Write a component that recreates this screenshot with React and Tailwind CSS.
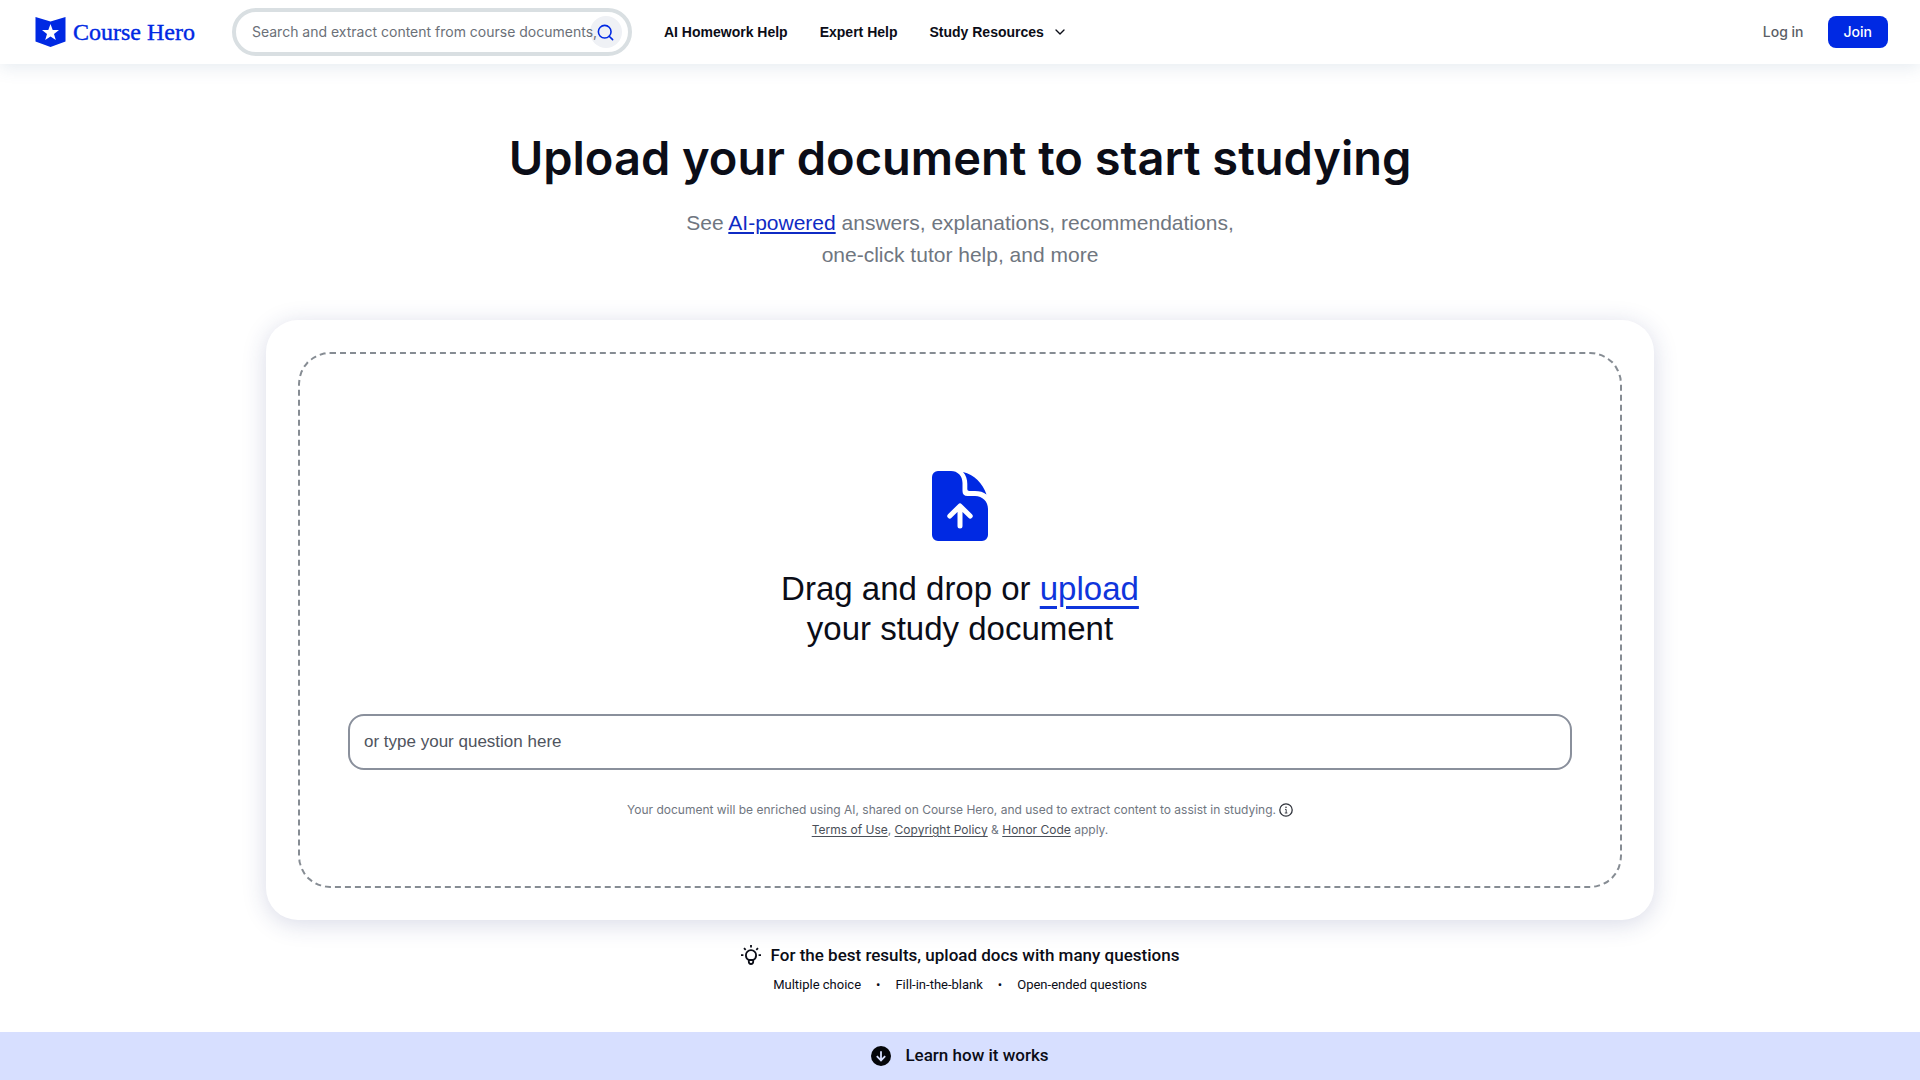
import { ChevronDown, Search } from "lucide-react";

const sans = "font-['Liberation_Sans',Arial,sans-serif]";
const small = "font-['Roboto',sans-serif]";
const inter = "font-['Inter',sans-serif]";

function Logo() {
  return (
    <a href="#" aria-label="Course Hero" className="flex items-center gap-[7px] text-[#0029e3]">
      <svg viewBox="0 0 31 30" className="h-[30px] w-[31px]" aria-hidden="true">
        <path d="M0.5 0 L15.5 4.5 L30.5 0 V24.5 L15.5 30 L0.5 24.5 Z" fill="currentColor" />
        <path
          d="M15.5 7 L17.7 12.9 L24 13.1 L19 17 L20.8 23 L15.5 19.5 L10.2 23 L12 17 L7 13.1 L13.3 12.9 Z"
          fill="white"
        />
      </svg>
      <span className="font-['Liberation_Serif',serif] text-2xl leading-8 [-webkit-text-stroke:0.4px_currentColor]">
        Course Hero
      </span>
    </a>
  );
}

function Header() {
  return (
    <header className="flex h-16 items-center bg-white pl-[35px] pr-8 shadow-[0_4px_16px_rgba(70,110,150,0.13)]">
      <Logo />
      <form className="ml-[37px] flex h-12 w-[400px] items-center rounded-full border-4 border-[#d9dfe2] pl-4 pr-1.5">
        <input
          type="text"
          aria-label="Search"
          placeholder="Search and extract content from course documents,"
          className={`z-10 -mr-2 min-w-0 flex-1 bg-transparent text-sm text-gray-800 outline-none placeholder:text-[#6b7078] ${inter}`}
        />
        <button
          type="button"
          aria-label="Submit search"
          className="flex size-8 shrink-0 items-center justify-center rounded-full bg-[#eff1f5] text-[#0029e3]"
        >
          <Search size={19} strokeWidth={2} />
        </button>
      </form>
      <nav className="ml-8 flex items-center gap-8 text-sm font-bold text-[#0b0d17]">
        <a href="#">AI Homework Help</a>
        <a href="#">Expert Help</a>
        <button type="button" className="flex items-center gap-2">
          Study Resources
          <ChevronDown size={16} strokeWidth={2} />
        </button>
      </nav>
      <div className={`ml-auto flex items-center gap-6 text-sm font-medium ${inter}`}>
        <a href="#" className="text-[#5a5e66]">Log in</a>
        <button type="button" className="h-8 rounded-lg bg-[#0029e3] px-4 text-white">Join</button>
      </div>
    </header>
  );
}

function UploadIcon() {
  return (
    <svg viewBox="0 0 56 70" className="h-[70px] w-14" aria-hidden="true">
      <path
        d="M6 0 H19 C25.5 0 30.5 4.8 30.5 12 V20 C30.5 23.2 32.3 25 35.5 25 H43 C50.5 25 56 30.5 56 38 V64 A6 6 0 0 1 50 70 H6 A6 6 0 0 1 0 64 V6 A6 6 0 0 1 6 0 Z"
        fill="#0029e3"
      />
      <path d="M31 1 C42 3.5 51 12.5 54.5 23.5 C51.5 21 47.5 20 43 20 H37.5 C36 20 35.3 19.3 35.3 18 V13 C35.3 8.3 34 4.3 31 1 Z" fill="#0029e3" />
      <path
        d="M28 55 V35.5 M17.8 45 L28 35 L38.2 45"
        fill="none"
        stroke="white"
        strokeWidth="5"
        strokeLinecap="round"
        strokeLinejoin="round"
      />
    </svg>
  );
}

function InfoIcon() {
  return (
    <svg viewBox="0 0 14 14" className="size-3.5" fill="none" stroke="currentColor" aria-hidden="true">
      <circle cx="7" cy="7" r="6.2" strokeWidth="1.3" />
      <path d="M6 6.4 H7.2 V10 M5.8 10 H8.4" strokeWidth="0.9" />
      <circle cx="7" cy="4.3" r="0.8" fill="currentColor" stroke="none" />
    </svg>
  );
}

function BulbIcon() {
  return (
    <svg viewBox="0 0 20 20" className="size-5" fill="none" stroke="currentColor" strokeWidth="1.8" aria-hidden="true">
      <path d="M8 15 C5.9 14.2 4.9 12.2 4.9 10.2 A5.1 5.1 0 0 1 15.1 10.2 C15.1 12.2 14.1 14.2 12 15 Z" />
      <path d="M7.8 15 V16.8 A2.2 2.2 0 0 0 12.2 16.8 V15" />
      <path d="M10 0 V2.4 M0 10.2 H2.4 M17.6 10.2 H20 M3 3.1 L4.7 4.8 M17 3.1 L15.3 4.8" />
    </svg>
  );
}

function DownIcon() {
  return (
    <svg viewBox="0 0 20 20" className="size-5" aria-hidden="true">
      <circle cx="10" cy="10" r="10" fill="#05060a" />
      <path d="M10 5.2 V14.2 M5.8 10.2 L10 14.4 L14.2 10.2" fill="none" stroke="#d7dfff" strokeWidth="1.8" />
    </svg>
  );
}

export default function App() {
  return (
    <div className={`flex min-h-screen flex-col bg-white text-[#0b0d17] ${sans}`}>
      <Header />
      <main className="flex flex-1 flex-col items-center px-8 pt-[62px]">
        <h1 className={`text-center text-[47px] font-semibold leading-[64px] ${inter}`}>Upload your document to start studying</h1>
        <p className="mt-[17px] text-center text-[21px] leading-8 text-[#6f7680]">
          See <a href="#" className="text-[#0f2bc4] underline underline-offset-2">AI-powered</a> answers, explanations, recommendations,
          <br />
          one-click tutor help, and more
        </p>
        <section className="mt-[49px] w-full max-w-[1388px] rounded-[32px] bg-white p-8 shadow-[0_4px_24px_rgba(40,50,120,0.18)]">
          <div className="flex flex-col items-center rounded-[32px] border-2 border-dashed border-[#868c93] px-12 pb-[46px] pt-[117px]">
            <UploadIcon />
            <h2 className="mt-7 text-center text-[33px] leading-10">
              Drag and drop or{" "}
              <button type="button" className="text-[#0f35dc] underline decoration-[3px] underline-offset-[6px]">upload</button>
              <br />
              your study document
            </h2>
            <input
              type="text"
              aria-label="Type your question"
              placeholder="or type your question here"
              className="mt-[65px] h-14 w-full rounded-2xl border-2 border-[#8a909c] px-3.5 text-[17px] outline-none placeholder:text-[#4f545e]"
            />
            <p className={`mt-[30px] text-center text-xs leading-5 text-[#70767f] ${inter}`}>
              <span className="flex items-center justify-center gap-[3px]">
                Your document will be enriched using AI, shared on Course Hero, and used to extract content to assist in studying.
                <button type="button" aria-label="More information" className="text-[#30343c]"><InfoIcon /></button>
              </span>
              <a href="#" className="text-[#4a4f58] underline underline-offset-2">Terms of Use</a>,{" "}
              <a href="#" className="text-[#4a4f58] underline underline-offset-2">Copyright Policy</a> &amp;{" "}
              <a href="#" className="text-[#4a4f58] underline underline-offset-2">Honor Code</a> apply.
            </p>
          </div>
        </section>
        <div className={`mt-[23px] flex items-center gap-2.5 text-[17px] font-medium leading-6 ${small}`}>
          <BulbIcon />
          <h3>For the best results, upload docs with many questions</h3>
        </div>
        <ul className={`mb-[37px] mt-2 flex items-center gap-[15px] text-[13px] leading-5 ${small}`}>
          <li>Multiple choice</li>
          <li aria-hidden="true">•</li>
          <li>Fill-in-the-blank</li>
          <li aria-hidden="true">•</li>
          <li>Open-ended questions</li>
        </ul>
      </main>
      <button type="button" className={`flex h-12 w-full items-center justify-center gap-3.5 bg-[#d7dfff] text-[17px] font-medium ${small}`}>
        <DownIcon />
        Learn how it works
      </button>
    </div>
  );
}
